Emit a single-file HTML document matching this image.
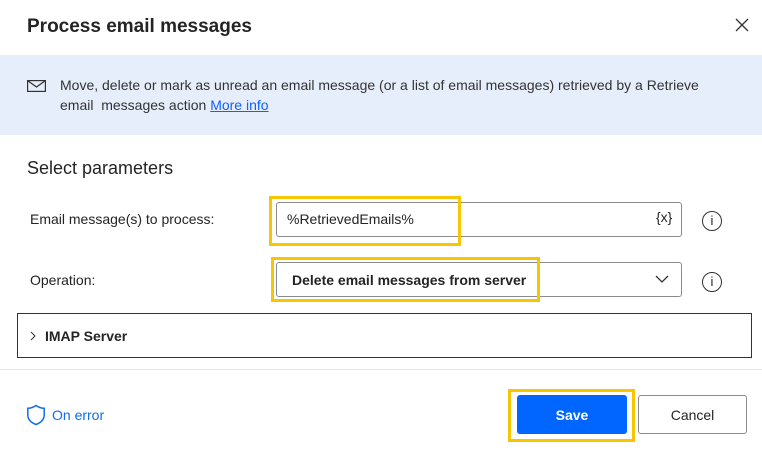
<!DOCTYPE html>
<html><head><style>
*{box-sizing:border-box;margin:0;padding:0}
body{width:762px;height:453px;background:#fff;font-family:"Segoe UI","Liberation Sans",sans-serif;color:#242424;position:relative;overflow:hidden}
.a{position:absolute}
.t{font-size:14px;white-space:nowrap}
.box{position:absolute;border:1px solid #8a8a8a;border-radius:3px;background:#fff}
.y{position:absolute;border:3px solid #f7c600}
.info{position:absolute;width:20px;height:20px;border:1.3px solid #333;border-radius:50%;font-size:13px;text-align:center;line-height:17px;font-family:"Liberation Sans",sans-serif}
</style></head><body>
<div class="a" style="left:27px;top:16px;font-size:19px;font-weight:600">Process email messages</div>
<svg class="a" style="left:735px;top:18px" width="14" height="14" viewBox="0 0 14 14"><path d="M1 1L13 13M13 1L1 13" stroke="#333" stroke-width="1.3"/></svg>
<div class="a" style="left:0;top:55px;width:762px;height:80px;background:#e6eefc"></div>
<svg class="a" style="left:27px;top:80px" width="19" height="12" viewBox="0 0 19 12"><rect x="0.6" y="0.6" width="17.8" height="10.8" fill="none" stroke="#333" stroke-width="1.2"/><path d="M0.6 0.6L9.5 7L18.4 0.6" fill="none" stroke="#333" stroke-width="1.2"/></svg>
<div class="a t" style="left:60px;top:77px;color:#333">Move, delete or mark as unread an email message (or a list of email messages) retrieved by a Retrieve</div>
<div class="a t" style="left:60px;top:97px;color:#333">email&nbsp; messages action <span style="color:#0f62fe;text-decoration:underline">More info</span></div>
<div class="a" style="left:27px;top:158px;font-size:18px">Select parameters</div>
<div class="a t" style="left:30px;top:211px">Email message(s) to process:</div>
<div class="box" style="left:276px;top:202px;width:406px;height:35px"></div>
<div class="y" style="left:269px;top:196px;width:192px;height:50px"></div>
<div class="a t" style="left:287px;top:211px">%RetrievedEmails%</div>
<div class="a t" style="left:656px;top:209px">{x}</div>
<div class="info" style="left:702px;top:211px">i</div>
<div class="a t" style="left:30px;top:272px">Operation:</div>
<div class="box" style="left:276px;top:262px;width:406px;height:35px"></div>
<div class="y" style="left:271px;top:257px;width:269px;height:45px"></div>
<div class="a t" style="left:292px;top:272px;font-weight:600">Delete email messages from server</div>
<svg class="a" style="left:655px;top:275px" width="14" height="9" viewBox="0 0 14 9"><path d="M1 1L7 7L13 1" fill="none" stroke="#333" stroke-width="1.3"/></svg>
<div class="info" style="left:702px;top:272px">i</div>
<div class="a" style="left:17px;top:313px;width:735px;height:45px;border:1px solid #333"></div>
<svg class="a" style="left:30px;top:331px" width="6" height="10" viewBox="0 0 6 10"><path d="M1 1L5 5L1 9" fill="none" stroke="#333" stroke-width="1"/></svg>
<div class="a t" style="left:45px;top:328px;font-weight:600">IMAP Server</div>
<div class="a" style="left:0;top:369px;width:762px;height:1px;background:#e4e4e4"></div>
<svg class="a" style="left:26px;top:404px" width="20" height="22" viewBox="0 0 20 22"><path d="M10 1.5C7 3.5 4.5 4.3 1.8 4.3V11C1.8 15.5 5 18.6 10 20.5C15 18.6 18.2 15.5 18.2 11V4.3C15.5 4.3 13 3.5 10 1.5Z" fill="none" stroke="#0f6cf0" stroke-width="1.5"/></svg>
<div class="a t" style="left:52px;top:407px;color:#0f6cf0">On error</div>
<div class="y" style="left:508px;top:389px;width:127px;height:53px"></div>
<div class="a t" style="left:517px;top:395px;width:110px;height:39px;background:#0066ff;border-radius:3px;color:#fff;font-weight:600;text-align:center;line-height:41px">Save</div>
<div class="a t" style="left:638px;top:395px;width:109px;height:39px;border:1px solid #8a8a8a;border-radius:3px;text-align:center;line-height:39px">Cancel</div>
</body></html>
